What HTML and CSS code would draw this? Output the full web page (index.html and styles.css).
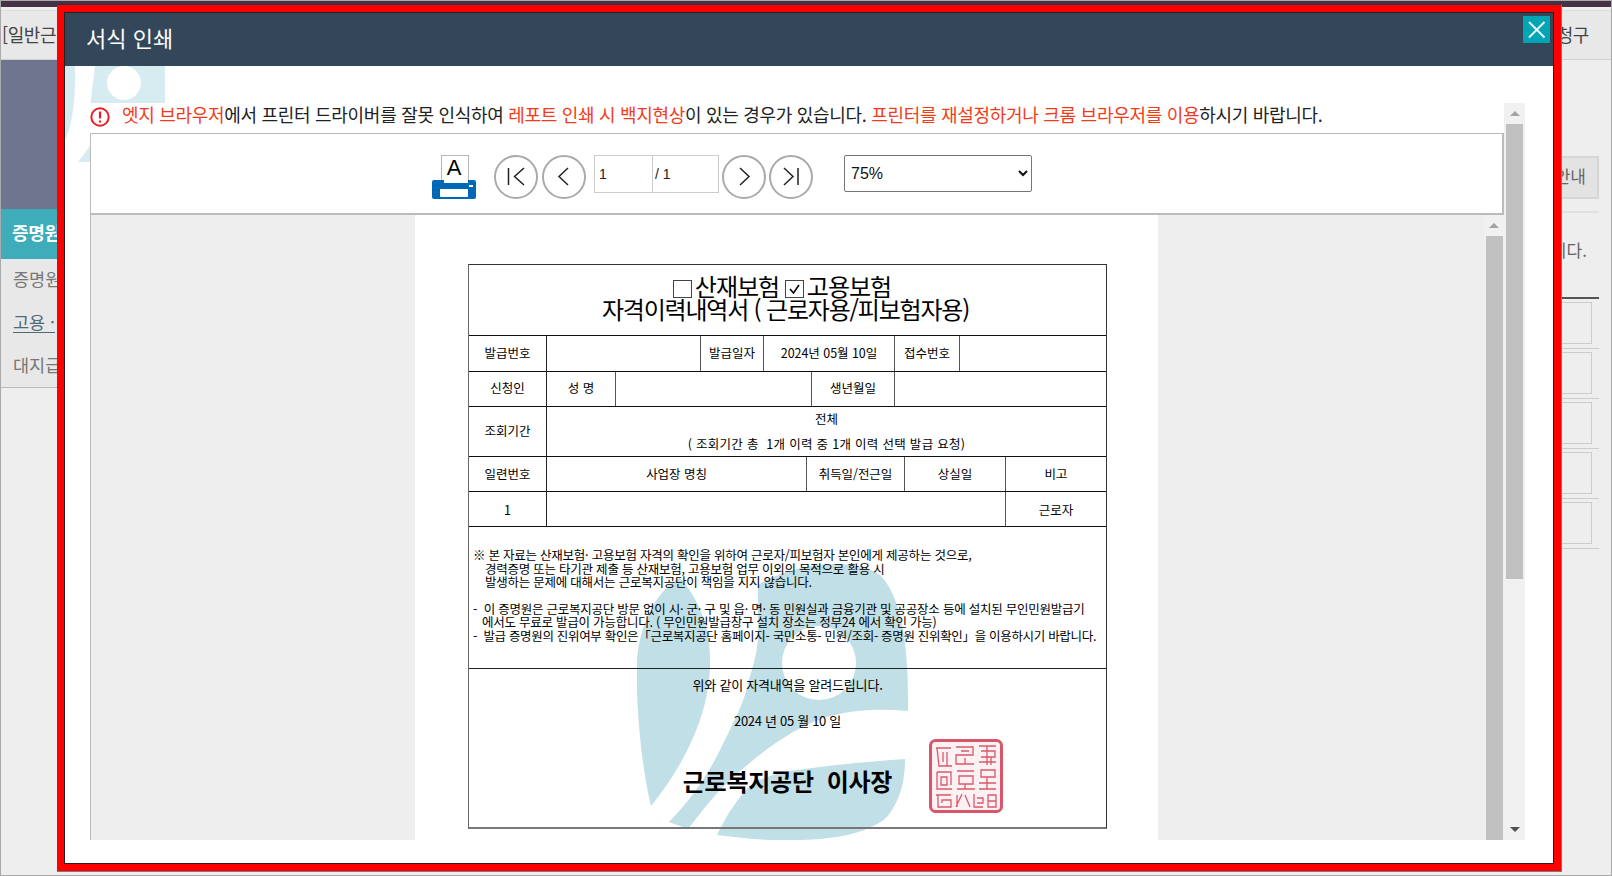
FILE: index.html
```html
<!DOCTYPE html>
<html lang="ko">
<head>
<meta charset="utf-8">
<title>서식 인쇄</title>
<link rel="stylesheet" href="styles.css">
</head>
<body>
<div class="page">
  <div class="top-strip"></div>
  <div class="top-gap"></div>
  <div class="tabbar"><span>[일반근</span><span>청구</span></div>
  <div class="bg-main">
    <aside class="sidebar">
      <div class="side-visual"></div>
      <div class="side-title">증명원</div>
      <ul class="side-menu">
        <li>증명원</li>
        <li class="current"><span>고용 ·</span></li>
        <li>대지급</li>
      </ul>
    </aside>
    <section class="right-panel">
      <div class="notice-btn">안내</div>
      <div class="notice-rule"></div>
      <p class="notice-text">니다.</p>
      <div class="list">
        <div class="list-row"><div class="list-box"></div></div>
        <div class="list-row"><div class="list-box"></div></div>
        <div class="list-row"><div class="list-box"></div></div>
        <div class="list-row"><div class="list-box"></div></div>
        <div class="list-row"><div class="list-box"></div></div>
      </div>
    </section>
  </div>

  <div class="modal">
    <div class="modal-frame">
      <div class="modal-inner">
        <header class="modal-head">
          <h1>서식 인쇄</h1>
          <button class="close-btn" type="button" aria-label="닫기">
            <svg viewBox="0 0 27 27" width="27" height="27"><path d="M6 6 L21.500 21.500 M21.500 6 L6 21.500" stroke="#e8f6f8" stroke-width="2" fill="none"/></svg>
          </button>
        </header>
        <div class="modal-body">
          <svg class="modal-mark" viewBox="0 0 110 100" width="110" height="100">
            <path fill="#d6ecf0" d="M0 0 H10 C11 34 7 60 0 74 Z"/>
            <path fill="#d6ecf0" d="M30 0 H100 V40 H25 Z"/>
            <path fill="#d6ecf0" d="M13 96 L25 80 V96 Z"/>
            <circle cx="59" cy="17" r="17" fill="#fff"/>
          </svg>
          <div class="viewer">
            <div class="viewer-main">
              <div class="warning">
                <svg class="warn-icon" viewBox="0 0 20 20" width="20" height="20"><circle cx="10" cy="10" r="8.700" fill="none" stroke="#ee1c25" stroke-width="2"/><path d="M10 4.500 V11.500 M10 13.500 V15.500" stroke="#ee1c25" stroke-width="2.200" fill="none"/></svg>
                <p><span class="hot">엣지 브라우저</span>에서 프린터 드라이버를 잘못 인식하여 <span class="hot">레포트 인쇄 시 백지현상</span>이 있는 경우가 있습니다. <span class="hot">프린터를 재설정하거나 크롬 브라우저를 이용</span>하시기 바랍니다.</p>
              </div>
              <div class="toolbar">
                <svg class="printer" viewBox="0 0 44 44" width="44" height="44">
                  <rect x="9.500" y="0.500" width="27" height="28" fill="#fff" stroke="#b5b5b5"/>
                  <text x="22" y="19.500" text-anchor="middle" class="printer-a">A</text>
                  <path fill="#0068b7" d="M2 25 H12 V28 H36 V25 H42 Q44 25 44 27 V42 Q44 44 42 44 H2 Q0 44 0 42 V27 Q0 25 2 25 Z"/>
                  <path fill="#fff" d="M8 34 H36 V41 Q36 42 35 42 H9 Q8 42 8 41 Z"/>
                  <rect x="37" y="30" width="4" height="2" fill="#fff"/>
                </svg>
                <button class="nav-btn" type="button" aria-label="처음"><svg viewBox="2 2 40 40" width="40" height="40"><path d="M14.500 13 V30 M30 13 L20.500 21.500 L30 30" class="nav-ico"/></svg></button>
                <button class="nav-btn" type="button" aria-label="이전"><svg viewBox="2 2 40 40" width="40" height="40"><path d="M26 13 L17 21.500 L26 30" class="nav-ico"/></svg></button>
                <div class="pager"><span class="pager-cur">1</span><span class="pager-total">/ 1</span></div>
                <button class="nav-btn nav-next" type="button" aria-label="다음"><svg viewBox="2 2 40 40" width="40" height="40"><path d="M18 13 L27 21.500 L18 30" class="nav-ico"/></svg></button>
                <button class="nav-btn" type="button" aria-label="마지막"><svg viewBox="2 2 40 40" width="40" height="40"><path d="M15 13 L24 21.500 L15 30 M29 13 V30" class="nav-ico"/></svg></button>
                <select class="zoom-select"><option>75%</option></select>
              </div>
              <div class="doc-area">
                <div class="doc-page">
                  <svg class="doc-mark" viewBox="0 0 300 295" width="300" height="295">
                    <g fill="#c1dfe6" transform="translate(-620 -550)">
                      <path d="M651 806 C640 760 636 700 637 663 C638 630 655 590 680 578 C700 600 711 630 710 665 C709 720 680 770 651 806 Z"/>
                      <path fill-rule="evenodd" d="M758 585 C790 565 850 555 880 575 C900 595 909 640 908 711 C880 708 850 710 827 717 C805 724 790 733 770 747 C750 762 735 775 720 790 C708 803 698 816 688 829 L669 822 C690 800 705 780 720 750 C735 720 745 700 748 683 C755 660 758 650 758 633 Z M782 663 A37 37 0 1 0 856 663 A37 37 0 1 0 782 663 Z"/>
                      <path d="M717 835 C728 812 740 795 753 783 C775 772 795 770 820 767 C850 763 880 761 905 759 C905 770 904 775 903 783 C900 795 895 807 887 817 C875 828 855 834 837 837 C815 840 790 841 770 840 C750 839 732 837 717 835 Z"/>
                    </g>
                  </svg>
                  <div class="cert">
                    <div class="cert-title">
                      <div class="title-first"><span class="chk"></span>산재보험 <span class="chk"><svg viewBox="0 0 19 18" width="19" height="18"><path d="M5 9 L8.500 13 L14 5" stroke="#000" stroke-width="1.600" fill="none"/></svg></span>고용보험</div>
                      <div>자격이력내역서 ( 근로자용/피보험자용)</div>
                    </div>
                    <div class="row r1"><div>발급번호</div><div></div><div>발급일자</div><div>2024년 05월 10일</div><div>접수번호</div><div></div></div>
                    <div class="row r2"><div>신청인</div><div>성 명</div><div></div><div>생년월일</div><div></div></div>
                    <div class="row r3"><div>조회기간</div><div class="period"><span>전체</span><span class="period-sub">( 조회기간 총 &nbsp;1개 이력 중 1개 이력 선택 발급 요청)</span></div></div>
                    <div class="row r4"><div>일련번호</div><div>사업장 명칭</div><div>취득일/전근일</div><div>상실일</div><div>비고</div></div>
                    <div class="row r5"><div>1</div><div></div><div>근로자</div></div>
                    <div class="notes">
                      <p>※ 본 자료는 산재보험· 고용보험 자격의 확인을 위하여 근로자/피보험자 본인에게 제공하는 것으로,</p>
                      <p class="in2">경력증명 또는 타기관 제출 등 산재보험, 고용보험 업무 이외의 목적으로 활용 시</p>
                      <p class="in2">발생하는 문제에 대해서는 근로복지공단이 책임을 지지 않습니다.</p>
                      <p class="blank"></p>
                      <p>-&nbsp; 이 증명원은 근로복지공단 방문 없이 시· 군· 구 및 읍· 면· 동 민원실과 금융기관 및 공공장소 등에 설치된 무인민원발급기</p>
                      <p class="in1">에서도 무료로 발급이 가능합니다. ( 무인민원발급창구 설치 장소는 정부24 에서 확인 가능)</p>
                      <p class="tight">-&nbsp; 발급 증명원의 진위여부 확인은「근로복지공단 홈페이지- 국민소통- 민원/조회- 증명원 진위확인」을 이용하시기 바랍니다.</p>
                    </div>
                    <div class="sign">
                      <p class="sign-line">위와 같이 자격내역을 알려드립니다.</p>
                      <p class="sign-date">2024 년 05 월 10 일</p>
                      <p class="sign-name">근로복지공단&nbsp; 이사장</p>
                      <svg class="seal" viewBox="0 0 74 74" width="74" height="74" aria-hidden="true">
                        <rect x="1.500" y="1.500" width="71" height="71" rx="5" fill="#fdf1f3" stroke="#d8566a" stroke-width="3"/>
                        <path fill="none" stroke="#d9596c" stroke-width="1.300" d="M7 9 H22 M8 9 L10 27 H23 M14 13 V23 M18 13 V27 M27 8 H44 V16 H27 V25 H45 M36 19 V25 M32 12 H40 M50 7 H67 M52 12 H66 V18 H52 M58 7 V26 M50 23 H67 M62 18 V26 M8 33 H22 V46 M8 33 V50 H23 M12 38 H18 V46 H12 Z M28 32 H45 M30 37 H44 V45 H30 Z M28 50 H46 M36 45 V50 M52 31 H66 V38 H52 Z M58 38 V50 M50 44 H67 M50 50 H67 M7 56 H22 M9 56 V68 H22 V61 H13 V64 M28 56 V68 M33 55 L27 68 M36 56 L41 68 M45 55 V68 H54 M48 59 H54 V64 H48 M59 56 H67 V68 H59 Z M59 62 H67"/>
                      </svg>
                    </div>
                  </div>
                </div>
                <div class="scroll scroll-inner">
                  <div class="scroll-btn"><span class="tri-up"></span></div>
                  <div class="thumb thumb-full"></div>
                </div>
              </div>
            </div>
            <div class="scroll scroll-outer">
              <div class="scroll-btn"><span class="tri-up"></span></div>
              <div class="thumb thumb-outer"></div>
              <div class="scroll-btn scroll-down"><span class="tri-down"></span></div>
            </div>
          </div>
        </div>
      </div>
    </div>
  </div>
</div>
</body>
</html>
```

FILE: styles.css
```css
* { box-sizing: border-box; }
html, body { margin: 0; padding: 0; }
body { width: 1612px; height: 876px; overflow: hidden; background: #eee; font-family: "Noto Sans CJK KR", "Liberation Sans", sans-serif; color: #000; }
p, h1, ul { margin: 0; padding: 0; }

.page { position: relative; width: 1612px; height: 876px; display: flex; flex-direction: column; background: #eee; border: 1px solid #aaa; overflow: hidden; }
.top-strip { height: 6px; background: #463246; flex: none; }
.top-gap { height: 4px; background: #eee; border-bottom: 1px solid #ddd; flex: none; }
.tabbar { height: 49px; flex: none; background: #e8e8e8; border-bottom: 1px solid #d0d0d0; display: flex; justify-content: space-between; align-items: center; padding: 0 22px 2px 1px; font-size: 18px; color: #444; letter-spacing: -0.4px; white-space: nowrap; }

.bg-main { flex: 1; display: flex; justify-content: space-between; }
.sidebar { width: 240px; }
.side-visual { height: 149px; background: linear-gradient(112deg, #6f758e 62%, #767d97 62.5%); }
.side-title { height: 50px; background: #3fadb9; color: #fff; font-weight: 700; font-size: 18px; line-height: 46px; padding-left: 11px; letter-spacing: -0.3px; white-space: nowrap; }
.side-menu { list-style: none; background: #e8e8e8; height: 129px; border-bottom: 1px solid #bbb; font-size: 17.500px; color: #777; white-space: nowrap; }
.side-menu li { height: 43px; line-height: 39px; padding-left: 12px; }
.side-menu .current { color: #4f6b78; }
.side-menu .current span { text-decoration: underline; text-underline-offset: 3px; display: inline-block; width: 60px; }

.right-panel { width: 170px; margin-right: 12px; padding-top: 96px; display: flex; flex-direction: column; }
.notice-btn { height: 43px; background: #e3e3e3; border: 2px solid #d6d6d6; border-left: 0; text-align: right; padding-right: 11px; line-height: 35px; font-size: 17px; color: #666; }
.notice-rule { height: 2px; background: #e0e0e0; margin-top: 12px; flex: none; }
.notice-text { height: 86px; border-bottom: 2px solid #555; text-align: right; padding: 25px 12px 0 0; font-size: 17px; line-height: 24px; color: #666; }
.list { display: flex; flex-direction: column; }
.list-row { height: 50px; padding: 3px 7px 4px 0; border-bottom: 1px solid #ccc; }
.list-box { height: 42px; border: 1px solid #ccc; }

.modal { position: absolute; left: 56px; top: 3px; width: 1505px; height: 868px; border: 1px solid #7a7a7a; border-left: 0; border-top-color: #333; }
.modal-frame { height: 100%; border: 7px solid #f00; }
.modal-inner { height: 100%; border: 1px solid #222; background: #fff; display: flex; flex-direction: column; }
.modal-head { flex: none; height: 53px; background: #34475a; position: relative; padding-left: 21px; }
.modal-head h1 { font-size: 22px; font-weight: 400; line-height: 49px; color: #fff; letter-spacing: 0; }
.close-btn { position: absolute; right: 3px; top: 3px; width: 27px; height: 27px; padding: 0; border: 0; background: #00a5b5; display: block; }
.close-btn svg { display: block; }

.modal-body { flex: 1; position: relative; padding: 37px 28px 23px 25px; min-height: 0; }
.modal-mark { position: absolute; left: 0; top: 0; }
.viewer { position: relative; height: 737px; display: flex; }
.viewer-main { width: 1414px; display: flex; flex-direction: column; }

.warning { flex: none; height: 30px; background: #fff; display: flex; align-items: center; gap: 12px; padding-bottom: 8px; }
.warn-icon { flex: none; margin-top: 6px; }
.warning p { font-size: 18px; line-height: 24px; color: #222; letter-spacing: -0.3px; white-space: nowrap; }
.hot { color: #f33b1c; }

.toolbar { flex: none; height: 82px; background: #fff; border: 1px solid #bbb; border-width: 1px 2px 2px 1px; display: flex; align-items: flex-start; padding: 21px 0 0 341px; }
.printer { flex: none; margin-right: 18px; }
.printer-a { font: 22px "Liberation Sans", sans-serif; fill: #000; }
.nav-btn { flex: none; width: 44px; height: 44px; padding: 0; border: 2px solid #aaa; border-radius: 50%; background: #fff; margin-right: 4px; display: flex; }
.nav-next { margin-right: 3px; }
.nav-btn svg { display: block; }
.nav-ico { fill: none; stroke: #222; stroke-width: 1.500; }
.pager { flex: none; width: 125px; height: 38px; margin: 0 3px 0 4px; border: 1px solid #ccc; display: flex; font: 14px/36px "Liberation Sans", sans-serif; color: #222; }
.pager-cur { width: 58px; padding-left: 4px; border-right: 1px solid #ccc; }
.pager-total { padding-left: 2px; }
.zoom-select { flex: none; width: 188px; height: 37px; margin-left: 27px; padding-left: 2px; font: 16px "Liberation Sans", sans-serif; background: #fff; color: #111; border: 1px solid #767676; border-radius: 2px; }

.doc-area { flex: 1; min-height: 0; display: flex; background: #eee; border-left: 1px solid #bbb; padding-left: 324px; justify-content: space-between; overflow: hidden; }
.doc-page { position: relative; width: 743px; background: #fff; padding: 49px 0 0 53px; overflow: hidden; }
.doc-mark { position: absolute; left: 205px; top: 335px; }

.cert { position: relative; width: 639px; height: 565px; border: 1px solid #333; border-left-color: #666; border-bottom: 2px solid #777; display: flex; flex-direction: column; }
.cert-title { flex: none; height: 71px; border-bottom: 1px solid #111; text-align: center; font-size: 24px; line-height: 22px; letter-spacing: -1.2px; padding: 10px 4px 0 0; white-space: nowrap; color: #000; }
.title-first { padding-right: 7px; letter-spacing: -1px; }
.chk { display: inline-block; width: 19px; height: 18px; border: 1px solid #444; vertical-align: -2px; margin-right: 3px; overflow: hidden; }
.chk svg { display: block; margin: -1px 0 0 -1px; }

.row { flex: none; display: grid; border-bottom: 1px solid #111; font-size: 12.500px; letter-spacing: -0.05px; white-space: nowrap; }
.row > div { display: flex; align-items: center; justify-content: center; border-right: 1px solid #555; padding-bottom: 3px; }
.row > div:last-child { border-right: 0; }
.row > div:first-child { border-right-color: #222; }
.r1 { height: 36px; grid-template-columns: 78px 154px 63px 131px 65px 1fr; }
.r2 { height: 35px; grid-template-columns: 78px 69px 196px 83px 1fr; }
.r3 { height: 50px; grid-template-columns: 78px 1fr; }
.r4 { height: 35px; grid-template-columns: 78px 260px 98px 101px 1fr; }
.r4 > div { padding-bottom: 1px; }
.r5 { height: 35px; grid-template-columns: 78px 459px 1fr; }
.r5 > div { padding-bottom: 0; }
.row > .period { flex-direction: column; justify-content: space-between; padding: 2px 0 3px; line-height: 19px; }
.period-sub { letter-spacing: 0.3px; }

.notes { flex: none; height: 142px; border-bottom: 1px solid #222; padding: 21px 0 0 4px; font-size: 12.500px; line-height: 13.700px; letter-spacing: -0.24px; white-space: nowrap; }
.notes .in2 { padding-left: 12px; }
.notes .in1 { padding-left: 9px; }
.notes .blank { height: 12.500px; }
.notes .tight { letter-spacing: -0.32px; }

.sign { flex: 1; position: relative; text-align: center; white-space: nowrap; }
.sign-line { font-size: 13px; line-height: 18px; padding-top: 7px; letter-spacing: -0.2px; }
.sign-date { font-size: 13px; line-height: 18px; margin-top: 18px; letter-spacing: -0.3px; }
.sign-name { font-size: 24px; font-weight: 700; line-height: 32px; margin-top: 35px; letter-spacing: -0.25px; }
.seal { position: absolute; left: 460px; top: 70px; }

.scroll { flex: none; background: #f1f1f1; display: flex; flex-direction: column; }
.scroll-inner { width: 20px; padding-right: 1px; }
.scroll-outer { width: 21px; }
.scroll-btn { flex: none; height: 21px; display: flex; align-items: center; justify-content: center; }
.thumb { background: #c1c1c1; margin: 0 2px; }
.scroll-inner .thumb { margin: 0 0 0 2px; }
.thumb-full { flex: 1; }
.thumb-outer { height: 455px; }
.scroll-down { margin-top: auto; }
.tri-up { width: 0; height: 0; border: 5px solid transparent; border-top: 0; border-bottom: 5px solid #a3a3a3; }
.tri-down { width: 0; height: 0; border: 5px solid transparent; border-bottom: 0; border-top: 5px solid #505050; }
```
